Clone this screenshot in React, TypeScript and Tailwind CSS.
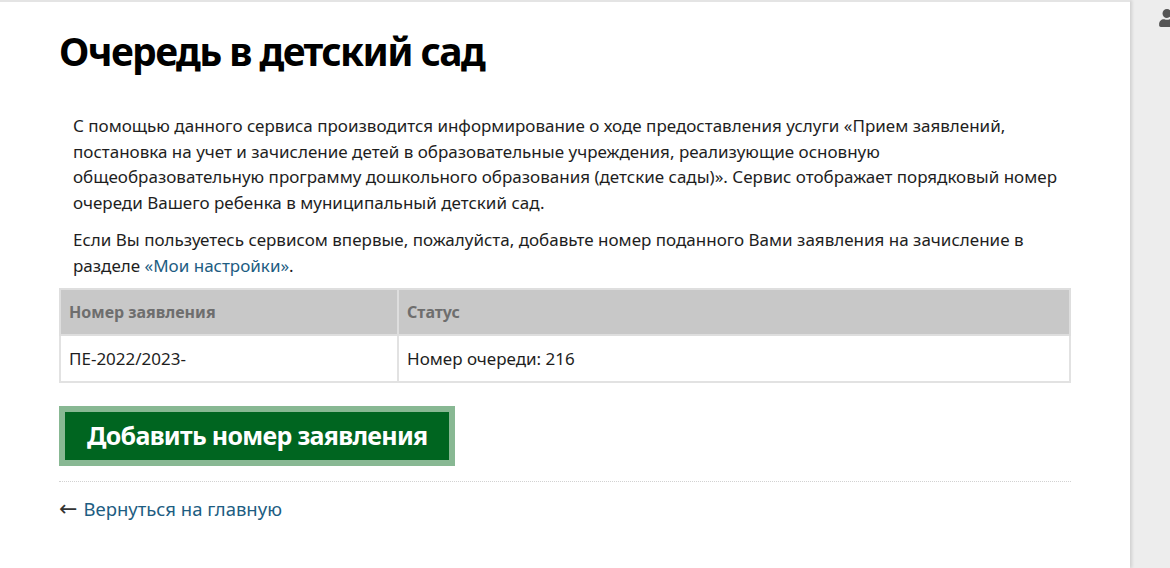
import { FaUser } from 'react-icons/fa';

export default function App() {
  return (
    <div className="flex h-[568px] w-[1170px] overflow-hidden bg-[#ededed] font-['Noto_Sans',sans-serif] text-[#1e1e1e]">
      <main className="h-full w-[1130px] shrink-0 border-t-2 border-[#e4e4e4] bg-white pl-[59px] pr-[59px] shadow-[2px_0_3px_rgba(0,0,0,0.12)]">
        <h1 className="mt-[23px] text-[39px] font-bold leading-[52px] tracking-[-1.6px] text-black">
          Очередь в детский сад
        </h1>
        <div className="mt-[36px] px-[14px] text-[17px] leading-[25.5px]">
          <p>
            С помощью данного сервиса производится информирование о ходе предоставления услуги «Прием заявлений,
            постановка на учет и зачисление детей в образовательные учреждения, реализующие основную
            общеобразовательную программу дошкольного образования (детские сады)». Сервис отображает порядковый номер
            очереди Вашего ребенка в муниципальный детский сад.
          </p>
          <p className="mt-[12px]">
            <span>Если Вы пользуетесь сервисом впервые, пожалуйста, добавьте номер поданного Вами заявления на зачисление в</span>
            <br />
            <span>разделе </span>
            <a className="text-[#1d5d82]">«Мои настройки»</a>
            <span>.</span>
          </p>
        </div>
        <table className="mt-[10px] w-[1012px] border-collapse text-[17px]">
          <thead>
            <tr className="h-[46px] bg-[#c8c8c8] text-left text-[#6e6e6e]">
              <th className="w-[338px] border-2 border-[#dedede] px-[8px] text-[16px] font-bold">Номер заявления</th>
              <th className="border-2 border-[#dedede] px-[8px] text-[16px] font-bold">Статус</th>
            </tr>
          </thead>
          <tbody>
            <tr className="h-[47px]">
              <td className="border-2 border-[#e2e2e2] px-[8px]">ПЕ-2022/2023-</td>
              <td className="border-2 border-[#e2e2e2] px-[8px]">Номер очереди: 216</td>
            </tr>
          </tbody>
        </table>
        <button className="mt-[23px] block border-[6px] border-[#88b893] bg-[#006520] px-[22px] pb-[6px] pt-[4px] text-[25px] font-bold leading-[38px] tracking-[-0.7px] text-white">
          Добавить номер заявления
        </button>
        <div className="mt-[15px] w-[1012px] border-t border-dotted border-[#d2d2d2]" />
        <a className="mt-[15px] flex items-center gap-[6px] text-[18.5px] leading-[24px] text-[#1d5d82]">
          <span className="font-['DejaVu_Sans',sans-serif] text-[22px] leading-[24px] text-[#333]">←</span>
          <span>Вернуться на главную</span>
        </a>
      </main>
      <div className="ml-[3px] flex-1 pl-[25px] pt-[9px]">
        <FaUser className="h-[18px] w-[18px] text-[#555]" />
      </div>
    </div>
  );
}
